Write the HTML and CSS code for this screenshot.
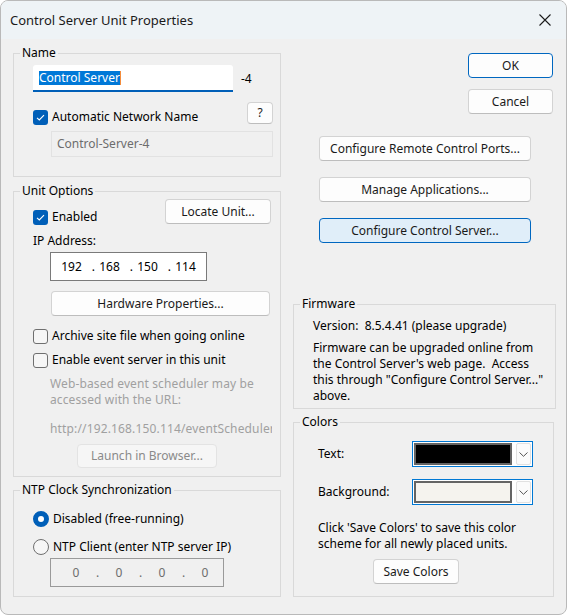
FILE: index.html
```html
<!DOCTYPE html>
<html lang="en">
<head>
    <meta charset="UTF-8">
    <title>Control Server Unit Properties</title>
    <link rel="stylesheet" href="styles.css">
</head>
<body>
    <div class="window">
        <div class="titlebar">
            <span class="title">Control Server Unit Properties</span>
            <svg class="close" width="12" height="12" viewBox="0 0 12 12">
                <path d="M0.5 0.5 L11.5 11.5 M11.5 0.5 L0.5 11.5" stroke="#1b1b1b" stroke-width="1.1" fill="none"/>
            </svg>
        </div>

        <div class="content">
            <!-- left column -->
            <div class="col-left">
                <fieldset class="group group-name">
                    <legend>Name</legend>
                    <div class="group-body">
                        <div class="name-row">
                            <div class="edit-focus"><span class="sel">Control Server</span><span class="caret"></span></div>
                            <span class="suffix">-4</span>
                        </div>
                        <div class="auto-row">
                            <label class="check">
                                <span class="box checked">
                                    <svg width="15" height="15" viewBox="0 0 15 15"><path d="M4 7.8 L6.3 10 L11 5.2" stroke="#fff" stroke-width="1.1" fill="none"/></svg>
                                </span>
                                Automatic Network Name
                            </label>
                            <button class="btn btn-help">?</button>
                        </div>
                        <div class="edit-disabled">Control-Server-4</div>
                    </div>
                </fieldset>

                <fieldset class="group group-unit">
                    <legend>Unit Options</legend>
                    <div class="group-body">
                        <div class="unit-top">
                            <label class="check">
                                <span class="box checked">
                                    <svg width="15" height="15" viewBox="0 0 15 15"><path d="M4 7.8 L6.3 10 L11 5.2" stroke="#fff" stroke-width="1.1" fill="none"/></svg>
                                </span>
                                Enabled
                            </label>
                            <button class="btn btn-locate">Locate Unit...</button>
                        </div>
                        <div class="ip-label">IP Address:</div>
                        <div class="ipbox ip-unit">
                            <span class="oct">192</span><span class="dot">.</span>
                            <span class="oct">168</span><span class="dot">.</span>
                            <span class="oct">150</span><span class="dot">.</span>
                            <span class="oct">114</span>
                        </div>
                        <button class="btn btn-hardware">Hardware Properties...</button>
                        <label class="check check-archive"><span class="box"></span>Archive site file when going online</label>
                        <label class="check check-event"><span class="box"></span>Enable event server in this unit</label>
                        <div class="note">Web-based event scheduler may be<br>accessed with the URL:</div>
                        <div class="url">http://192.168.150.114/eventScheduler</div>
                        <button class="btn btn-launch" disabled>Launch in Browser...</button>
                    </div>
                </fieldset>

                <fieldset class="group group-ntp">
                    <legend>NTP Clock Synchronization</legend>
                    <div class="group-body">
                        <label class="radio radio-first"><span class="circle on"></span>Disabled (free-running)</label>
                        <label class="radio radio-second"><span class="circle"></span>NTP Client (enter NTP server IP)</label>
                        <div class="ipbox ip-ntp">
                            <span class="oct">0</span><span class="dot">.</span>
                            <span class="oct">0</span><span class="dot">.</span>
                            <span class="oct">0</span><span class="dot">.</span>
                            <span class="oct">0</span>
                        </div>
                    </div>
                </fieldset>
            </div>

            <!-- right column -->
            <div class="col-right">
                <button class="btn btn-ok">OK</button>
                <button class="btn btn-cancel">Cancel</button>
                <button class="btn btn-wide btn-ports">Configure Remote Control Ports...</button>
                <button class="btn btn-wide btn-apps">Manage Applications...</button>
                <button class="btn btn-wide btn-server">Configure Control Server...</button>

                <fieldset class="group group-firmware">
                    <legend>Firmware</legend>
                    <div class="fw-body">
                        <div class="fw-version">Version:&nbsp;&nbsp;8.5.4.41 (please upgrade)</div>
                        <div class="fw-text">Firmware can be upgraded online from<br>the Control Server's web page.&nbsp; Access<br>this through "Configure Control Server..."<br>above.</div>
                    </div>
                </fieldset>

                <fieldset class="group group-colors">
                    <legend>Colors</legend>
                    <div class="colors-body">
                        <div class="color-row row-text">
                            <span class="color-label">Text:</span>
                            <div class="combo">
                                <span class="swatch swatch-black"></span>
                                <span class="drop">
                                    <svg width="9" height="5" viewBox="0 0 9 5"><path d="M0.5 0.5 L4.5 4.3 L8.5 0.5" stroke="#555" stroke-width="1" fill="none"/></svg>
                                </span>
                            </div>
                        </div>
                        <div class="color-row row-bg">
                            <span class="color-label">Background:</span>
                            <div class="combo">
                                <span class="swatch swatch-cream"></span>
                                <span class="drop">
                                    <svg width="9" height="5" viewBox="0 0 9 5"><path d="M0.5 0.5 L4.5 4.3 L8.5 0.5" stroke="#555" stroke-width="1" fill="none"/></svg>
                                </span>
                            </div>
                        </div>
                        <div class="colors-text">Click 'Save Colors' to save this color<br>scheme for all newly placed units.</div>
                        <button class="btn btn-save">Save Colors</button>
                    </div>
                </fieldset>
            </div>
        </div>
    </div>
</body>
</html>
```

FILE: styles.css
```css
* {
    box-sizing: border-box;
}
html, body {
    margin: 0;
    padding: 0;
    background-color: #fff;
}
.window {
    width: 567px;
    height: 615px;
    border: 1px solid #b9b9b9;
    border-radius: 8px;
    background-color: #f0f0f0;
    overflow: hidden;
    font-family: "Noto Sans", sans-serif;
    font-size: 12px;
    line-height: 16px;
    color: #000;
}
.titlebar {
    height: 38px;
    background-color: #eef3f6;
    display: flex;
    align-items: center;
    justify-content: space-between;
    padding: 0 15px 0 9px;
}
.title {
    font-size: 13px;
    color: #1a1a1a;
}
.content {
    display: flex;
    gap: 12px;
    padding: 6px 0 0 12px;
}
.col-left {
    width: 268px;
    display: flex;
    flex-direction: column;
}
.col-right {
    width: 263px;
    display: flex;
    flex-direction: column;
    align-items: flex-start;
}

/* group boxes */
.group {
    margin: 0;
    padding: 0;
    min-width: 0;
    border: 1px solid #d9d9d9;
    width: 100%;
}
.group legend {
    margin-left: 6px;
    padding: 0 2px;
    line-height: 16px;
}
.group-body {
    padding: 0 0 0 19px;
    display: flex;
    flex-direction: column;
    align-items: flex-start;
}
.group-name {
    height: 132px;
}
.group-unit {
    height: 294px;
    margin-top: 6px;
}
.group-ntp {
    height: 115px;
    margin-top: 5px;
}

/* buttons */
.btn {
    font-family: inherit;
    font-size: 12px;
    line-height: 16px;
    color: #1a1a1a;
    background-color: #fdfdfd;
    border: 1px solid #d3d3d3;
    border-bottom-color: #bdbdbd;
    border-radius: 4px;
    padding: 0;
    height: 25px;
    margin: 0;
}
.btn:disabled {
    color: #8a8a8a;
    background-color: #f6f6f6;
    border-color: #e3e3e3;
}

/* checkbox / radio */
.check, .radio {
    display: flex;
    align-items: center;
    gap: 4px;
    line-height: 16px;
}
.box {
    width: 15px;
    height: 15px;
    border: 1px solid #6f6f6f;
    border-radius: 3px;
    background-color: #f6f6f6;
    display: block;
}
.box.checked {
    border: none;
    background-color: #005fb8;
}
.box svg {
    display: block;
}
.circle {
    width: 16px;
    height: 16px;
    border: 1px solid #6f6f6f;
    border-radius: 50%;
    background-color: #f6f6f6;
    display: block;
}
.circle.on {
    border: 5px solid #005fb8;
    background-color: #fff;
}

/* name group */
.name-row {
    display: flex;
    align-items: center;
    margin-top: 4px;
}
.edit-focus {
    width: 200px;
    height: 27px;
    background-color: #fff;
    border-bottom: 2px solid #005fb8;
    border-radius: 3px 3px 0 0;
    padding-left: 6px;
    display: flex;
    align-items: center;
}
.sel {
    background-color: #0078d7;
    color: #fff;
    line-height: 14px;
}
.caret {
    width: 1px;
    height: 14px;
    background-color: #f48c3c;
}
.suffix {
    margin-left: 8px;
}
.auto-row {
    align-self: stretch;
    display: flex;
    justify-content: space-between;
    align-items: flex-end;
    margin-top: 10px;
    padding-right: 7px;
    height: 23px;
}
.btn-help {
    width: 26px;
    height: 22px;
    align-self: flex-start;
}
.edit-disabled {
    align-self: stretch;
    margin: 6px 7px 0 18px;
    height: 26px;
    border: 1px solid #e2e2e2;
    background-color: #f0f0f0;
    color: #6d6d6d;
    padding-left: 5px;
    display: flex;
    align-items: center;
}

/* unit options */
.unit-top {
    align-self: stretch;
    display: flex;
    justify-content: space-between;
    align-items: flex-end;
    padding-right: 9px;
    height: 25px;
}
.unit-top .check {
    margin-bottom: -1px;
}
.btn-locate {
    width: 106px;
}
.ip-label {
    margin-top: 9px;
}
.ipbox {
    display: flex;
    align-items: center;
    border: 1px solid #7a7a7a;
    background-color: #fff;
    height: 29px;
    margin: 3px 0 0 17px;
}
.ip-unit {
    width: 157px;
    padding-left: 6px;
}
.ip-unit .oct {
    width: 29px;
    text-align: center;
}
.ip-unit .dot {
    width: 9px;
    text-align: right;
}
.ip-ntp {
    width: 174px;
    padding-left: 8px;
    background-color: #f0f0f0;
    border-color: #9a9a9a;
    color: #6d6d6d;
}
.ip-ntp .oct {
    width: 34px;
    text-align: center;
}
.ip-ntp .dot {
    width: 9px;
    text-align: center;
}
.btn-hardware {
    width: 219px;
    margin: 10px 0 0 18px;
}
.check-archive {
    margin-top: 12px;
}
.check-event {
    margin-top: 8px;
}
.note {
    margin: 8px 0 0 17px;
    color: #a0a0a0;
    letter-spacing: 0.12px;
}
.url {
    margin: 13px 0 0 17px;
    width: 222px;
    overflow: hidden;
    white-space: nowrap;
    color: #a0a0a0;
    letter-spacing: 0.15px;
}
.btn-launch {
    width: 140px;
    height: 24px;
    margin: 7px 0 0 44px;
}

/* ntp */
.radio-first {
    margin-top: 13px;
}
.radio-second {
    margin-top: 12px;
}

/* right column */
.btn-ok {
    width: 85px;
    margin: 8px 0 0 175px;
    border: 1px solid #0067c0;
}
.btn-cancel {
    width: 85px;
    margin: 11px 0 0 175px;
}
.btn-wide {
    width: 212px;
    margin-left: 26px;
}
.btn-ports {
    margin-top: 22px;
}
.btn-apps {
    margin-top: 16px;
}
.btn-server {
    margin-top: 16px;
    background-color: #e0eef9;
    border-color: #0067c0;
}
.group-firmware {
    margin-top: 53px;
    height: 113px;
}
.fw-body {
    padding-left: 19px;
    white-space: nowrap;
}
.fw-version {
    margin-top: 6px;
}
.fw-text {
    margin-top: 6px;
}
.group-colors {
    margin-top: 5px;
    height: 183px;
    width: 261px;
}
.colors-body {
    padding-left: 24px;
    display: flex;
    flex-direction: column;
    align-items: flex-start;
}
.color-row {
    display: flex;
    align-items: center;
}
.row-text {
    margin-top: 11px;
}
.row-bg {
    margin-top: 12px;
}
.color-label {
    width: 94px;
}
.combo {
    width: 121px;
    height: 26px;
    border: 1px solid #0078d4;
    background-color: #fff;
    padding: 1px;
    display: flex;
    gap: 4px;
}
.swatch {
    flex: 1;
    border: 2px solid #646464;
}
.swatch-black {
    background-color: #000;
}
.swatch-cream {
    background-color: #f5f3ee;
}
.drop {
    width: 15px;
    border: 1px solid #e1e1e1;
    border-radius: 2px;
    background-color: #fbfbfb;
    display: flex;
    align-items: center;
    justify-content: center;
}
.drop svg {
    display: block;
}
.colors-text {
    margin-top: 15px;
    white-space: nowrap;
}
.btn-save {
    width: 86px;
    margin: 7px 0 0 55px;
}
```
